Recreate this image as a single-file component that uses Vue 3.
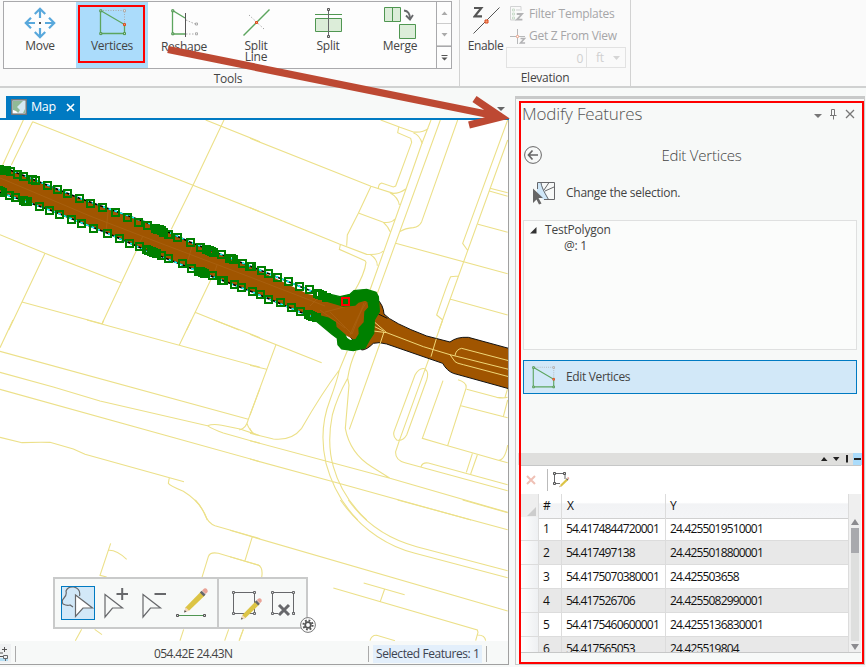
<script setup>
const rows = [
  ['1', '54.4174844720001', '24.4255019510001'],
  ['2', '54.417497138', '24.4255018800001'],
  ['3', '54.4175070380001', '24.425503658'],
  ['4', '54.417526706', '24.4255082990001'],
  ['5', '54.4175460600001', '24.4255136830001'],
  ['6', '54.417565053', '24.425519804'],
]

// Parcel and road lines, grouped by map tile. Units are thirds of a pixel.
const tiles = [
  { x: 0, y: 110, d: 'M70 30L8 165M98 35L34 165M98 35L579 226L780 305M617 30L780 95M672 30L579 226L514 358M0 374L135 430L364 519M135 430L66 576L26 660M66 576L306 641M409 422L306 641M632 510L560 660M585 607L717 660' },
  { x: 0, y: 320, d: 'M39 0L0 83M261 0L780 142M311 0L307 12M574 0L538 75M642 0L780 53M0 94L745 298M0 157L160 201L300 243L622 317Q640 311 665 316L720 327L780 347M622 317Q640 329 670 339L780 370M780 205L745 298Q739 325 718 330M740 308Q748 332 764 343M0 208L780 425M0 352L66 368Q110 366 150 367L220 387L255 403L552 485M508 472L505 490Q508 497 550 514Q605 548 622 600' },
  { x: 250, y: 320, d: 'M0 43L215 128M0 136L50 148M78 74L0 285M0 325Q5 340 20 345M0 340L70 357Q125 363 155 325Q215 220 268 150L292 92M268 150Q262 180 240 240Q205 330 228 430Q255 530 323 600M318 92Q300 130 293 175Q262 230 247 285Q230 370 250 440Q275 530 350 600M293 175L297 195L286 325Q300 400 365 440L420 475M402 36L298 328M0 362L420 475L773 577M0 417L250 485L663 600M495 165Q508 142 524 146Q538 155 530 180L470 345Q458 365 440 360Q428 350 432 335ZM578 0L548 85L448 362L437 395Q435 420 465 428L773 512M579 182L517 355L593 377L745 421L773 428M593 377L648 205Q652 187 624 179M650 208L740 232Q760 235 773 232M633 257L773 293M773 205L765 232M773 240L760 290M773 375Q765 420 745 421M513 440Q518 426 535 429L773 494M667 401L649 457M682 405L662 462' },
  { x: 250, y: 110, d: 'M0 85L363 229L430 250Q450 250 467 237M363 229L325 310L292 375L290 407M0 293L268 402L350 433Q390 435 399 423M392 30L450 52L490 66Q520 68 535 55M543 30L515 102L467 240L360 540M490 68Q510 75 517 102M446 52L443 68L482 85L485 97L437 228L430 231L395 219Q385 222 385 236M420 248Q445 262 448 285M327 310L400 337Q425 340 434 327M400 337Q415 350 420 365M360 433Q382 447 382 467M271 404L268 418L345 452L348 457Q345 490 310 550M571 30L382 550M623 30L515 335Q508 350 490 353Q465 355 450 365M437 400L773 491M773 30L638 400L652 420M773 90L567 660M720 235L773 248M718 243L773 259M684 343L773 367M626 498L602 500Q595 512 560 615L578 630M602 568L773 615' },
  { x: 0, y: 500, d: 'M586 0Q605 20 615 45Q625 70 645 77L780 116M757 110L735 182M780 197L655 160Q630 155 625 170L606 232M332 130L300 226L320 231M326 151Q350 150 380 178M245 388L226 422M284 388L306 404M551 388L540 422M686 388L674 422M730 388L718 422' },
  { x: 230, y: 500, d: 'M0 91L833 333M0 170L85 195Q100 203 95 232M40 388L27 422M331 0Q420 125 555 160L833 233M355 0Q430 105 560 140L833 212M503 0L833 89M698 0L833 38M310 264L742 390L744 397L737 422M743 405Q765 405 767 422M401 249L524 284M464 267L451 304M420 422Q425 405 440 406L495 422' },
]

const left = [
  [-3, 178], [5, 181], [12, 180], [18, 182], [31, 183], [53, 192], [71, 199], [97, 209], [107, 211], [142, 227], [172, 239], [202, 251], [238, 265], [271, 279], [307, 293], [346, 307], [382, 323], [415, 336], [442, 346],
  [466, 356], [472, 358], [478, 359], [484, 362], [490, 366], [505, 374], [532, 383], [571, 398], [601, 411], [620, 419], [628, 421], [634, 424], [640, 426], [664, 433], [688, 446], [694, 446], [699, 449], [727, 461], [748, 469],
  [-4, 240], [2, 243], [6, 247], [27, 257], [46, 263], [71, 271], [77, 273], [81, 275], [118, 289], [148, 302], [178, 314], [214, 329], [244, 341], [280, 356], [322, 371], [358, 386], [388, 401], [417, 409],
  [438, 418], [446, 420], [454, 424], [460, 428], [468, 431], [484, 435], [505, 446], [547, 461], [574, 474], [595, 483], [602, 485], [608, 488], [614, 489], [637, 497], [664, 510], [670, 511], [703, 524], [724, 533], [757, 545],
].map(([x, y]) => [x / 3, 110 + y / 3])
const right = [
  [3, 469], [34, 481], [56, 490], [82, 502], [115, 514], [148, 529], [178, 539], [201, 549], [208, 552], [216, 555], [228, 561],
  [8, 545], [31, 554], [55, 567], [91, 577], [124, 592], [151, 604], [174, 613], [181, 616], [188, 619], [198, 623],
].map(([x, y]) => [250 + x / 3, 110 + y / 3])
const vertices = [...left, ...right].map(([x, y]) => [Math.round(x - 0.5) - 3, Math.round(y - 0.5) - 3])
</script>

<template>
  <div class="app">
    <svg class="defs" width="0" height="0">
      <defs>
        <symbol id="vertex-shape" viewBox="0 0 27 27">
          <path d="M1.5 1.5H25.5V15" fill="none" stroke="#aaa" stroke-dasharray="1 1.5" />
          <path d="M1.5 1.5V24.5H25.5V15.5L1.5 1.5" fill="none" stroke="#5ca55e" stroke-width="1.3" />
          <path d="M.8.8h2v2h-2zM.8 23.6h2v2h-2zM24.5 23.6h2v2h-2z" fill="#cfe6cf" stroke="#4d944f" />
          <path d="M24.5.8h2v2h-2z" fill="#fff" stroke="#aaa" />
          <path d="M24.5 14.6h2v2h-2z" fill="#f3a078" stroke="#dc4a1c" />
        </symbol>
        <symbol id="pencil" viewBox="0 0 26 26">
          <path d="M1.5 25l1.2-5L19 3.5l4 4L6.5 23.5z" fill="#dcc445" />
          <path d="M1 25.5l1.6-5.4 4 3.6z" fill="#f3d9c0" />
          <path d="M1 25.5l.8-2.6 1.9 1.8z" fill="#555" />
          <path d="M17.5 4.8l2-2 4 4-2 2z" fill="#66676b" />
          <path d="M19.8 2.5L22 .5q2-.6 3 .8t.6 2.8l-2 2.2z" fill="#e9a396" />
        </symbol>
        <symbol id="frame" viewBox="0 0 24 24">
          <path d="M1.5 1.5h21v21h-21z" fill="none" stroke="#67686b" />
          <path d="M.5.5h2v2h-2zM21.5.5h2v2h-2zM.5 21.5h2v2h-2zM21.5 21.5h2v2h-2z" fill="#ddd" stroke="#67686b" />
        </symbol>
      </defs>
    </svg>

    <header class="ribbon">
      <section class="group tools">
        <div class="gallery">
          <div class="tool">
            <svg width="32" height="32" viewBox="0 0 32 32" fill="none" stroke="#58a8dc" stroke-width="2.2">
              <path d="M16 2V11M16 21V30M2 16H11M21 16H30M10.8 7L16 1.8L21.2 7M10.8 25L16 30.2L21.2 25M7 10.8L1.8 16L7 21.2M25 10.8L30.2 16L25 21.2" />
              <path d="M15 15h2v2h-2z" fill="#555" stroke="none" />
            </svg>
            <span>Move</span>
          </div>
          <div class="tool active">
            <svg class="shape" width="27" height="27"><use href="#vertex-shape" /></svg>
            <span>Vertices</span>
          </div>
          <div class="tool">
            <svg class="shape" width="27" height="28" viewBox="0 0 27 28" fill="none">
              <path d="M15 11L24 15M15 25H24" stroke="#aaa" stroke-dasharray="1.5 1.5" />
              <path d="M14 25H1.5V1.5L14 9" stroke="#5ca55e" stroke-width="1.3" />
              <path d="M14.5 4V28" stroke="#555" />
              <path d="M.8.8h2v2h-2zM.8 23.8h2v2h-2z" fill="#cfe6cf" stroke="#4d944f" />
              <path d="M24.5 14h2v2h-2zM24.5 23.8h2v2h-2z" fill="#fff" stroke="#aaa" />
            </svg>
            <span>Reshape</span>
          </div>
          <div class="tool">
            <svg class="shape" width="27" height="27" viewBox="0 0 27 27" fill="none">
              <path d="M6 6L21 20" stroke="#999" stroke-dasharray="1.2 2" />
              <path d="M.5 26.5L26.5 .5" stroke="#5ca55e" stroke-width="1.4" />
              <path d="M12.5 12.5h2v2h-2z" fill="#f3a078" stroke="#dc4a1c" />
            </svg>
            <span>Split<br />Line</span>
          </div>
          <div class="tool">
            <svg class="split" width="27" height="30" viewBox="0 0 27 30" fill="none">
              <path d="M0 6.5H27" stroke="#4f9651" />
              <path d="M.5 10.5h26v13H.5z" fill="#dcedd9" stroke="#4f9651" />
              <path d="M13.5 2V28" stroke="#67686b" />
              <path d="M12.5.5h2v2h-2zM12.5 27.5h2v2h-2z" fill="#ddd" stroke="#555" />
            </svg>
            <span>Split</span>
          </div>
          <div class="tool">
            <svg class="merge" width="33" height="33" viewBox="0 0 33 33" fill="none">
              <path d="M.5.5h16v14H.5zM15.5 17.5h16v14h-16z" fill="#dcedd9" stroke="#4f9651" />
              <path d="M8.5.5v14" stroke="#4f9651" />
              <path d="M20 3.5Q26 4 26 12M22 8.5L26 12.5L29 8" stroke="#67686b" stroke-width="1.8" />
            </svg>
            <span>Merge</span>
          </div>
          <div class="scroller">
            <i><svg width="7" height="4"><path d="M.5 4L3.5 .5L6.5 4z" fill="#aaa" /></svg></i>
            <i><svg width="7" height="4"><path d="M.5 0L3.5 3.5L6.5 0z" fill="#aaa" /></svg></i>
            <i class="more"><svg width="7" height="6"><path d="M.5 0h6v1h-6zM.5 2.5L3.5 5.5L6.5 2.5z" fill="#555" /></svg></i>
          </div>
        </div>
        <div class="caption">Tools</div>
      </section>

      <section class="group elevation">
        <div class="elev-body">
          <div class="enable">
            <svg width="28" height="29" viewBox="0 0 28 29" fill="none">
              <path d="M1 2H8.3L1.7 10.3H9" stroke="#555" stroke-width="2.2" />
              <path d="M.5 27.5L26.5 1.5" stroke="#555" />
              <path d="M12 14h3v3h-3z" fill="#f3a078" stroke="#dc4a1c" />
            </svg>
            <span>Enable</span>
          </div>
          <div class="elev-rows">
            <div class="elev-row">
              <svg width="17" height="16" viewBox="0 0 17 16" fill="none" stroke="#d2d3d4">
                <path d="M.5.5H11V5M.5.5V14H6" />
                <path d="M2.5 3h2v2h-2zM2.5 7h2v2h-2zM2.5 11h2v2h-2z" stroke="#cadccb" />
                <path d="M6 4h4M6 8h2" />
                <path d="M7 8h5l-5 5.6h5.4" stroke="#b3b3b5" stroke-width="1.8" />
              </svg>
              <span>Filter Templates</span>
            </div>
            <div class="elev-row second">
              <svg width="17" height="16" viewBox="0 0 17 16" fill="none">
                <path d="M0 8.5H15M7.5 1V16" stroke="#b7b8b9" />
                <path d="M6.5 7.5h2v2h-2z" fill="#fff" stroke="#eeb5a0" />
                <path d="M10.5 10.5h4l-4 4.5h4.6" stroke="#b3b3b5" stroke-width="1.6" />
              </svg>
              <span>Get Z From View</span>
            </div>
            <div class="elev-input">
              <b>0</b>
              <em>ft<svg width="7" height="4"><path d="M0 0h7L3.5 4z" fill="#d5d5d5" /></svg></em>
            </div>
          </div>
        </div>
        <div class="caption">Elevation</div>
      </section>
    </header>

    <main class="workspace">
      <section class="view">
        <div class="tabs">
          <div class="tab">
            <svg width="16" height="16" viewBox="0 0 16 16">
              <path d="M.8.8h14.4v14.4H.8z" fill="#d6e9f2" stroke="#777" stroke-width="1.4" />
              <path d="M2 2H12L8 6L6 8L9 11L7 14L2 11zM12 14l2-4v4z" fill="#91ba96" />
              <path d="M2 11l3 1 2 2H2z" fill="#fff" />
            </svg>
            <span>Map</span>
            <svg width="9" height="9" viewBox="0 0 9 9"><path d="M1 1L8 8M8 1L1 8" stroke="#fff" stroke-width="1.6" /></svg>
          </div>
          <svg class="tab-menu" width="8" height="4"><path d="M0 0h8L4 4z" fill="#666" /></svg>
        </div>

        <div class="map">
          <svg width="508" height="521" viewBox="0 120 508 521">
            <g v-for="(t, i) in tiles" :key="i" class="parcel" :transform="`translate(${t.x} ${t.y}) scale(.33333)`">
              <path :d="t.d" />
            </g>
            <g transform="translate(250 110) scale(.33333)">
              <path class="road" d="M382 568Q400 585 402 612Q425 638 530 678L600 696Q620 680 655 682L776 715V836L610 790Q590 782 578 760L410 702Q385 695 370 700Q350 720 335 720L300 680L370 600M385 612L412 625" />
              <path class="onroad" d="M372 635L410 668L520 710L600 734L776 778M362 662L410 668M374 650L402 664M600 734L615 755Q620 760 640 764L776 800M615 737Q618 718 635 715L776 752M402 666L390 702M559 686L543 740" />
            </g>
            <path class="band" d="M-4 169L10 170L47 185L79 198L148 223L190 242L250 266L308 294L345 302L365 296L373 312L355 340L345 335L330 325L300 312L250 291L190 268L150 252L107 233L50 210L-4 190Z" />
            <path class="faint" d="M0 178L5 180L90 216L160 243L250 277L325 306M108 212L106 232M143 236L138 246M193 243L188 260M217 265L212 280M318 298L310 306M325 312Q345 308 362 300M330 312L352 334L364 303M320 310L345 328M350 335Q358 315 366 303" />
            <g class="edge">
              <path d="M-4 169L10 170L47 185L79 198L148 223L190 242L250 266L316 293M-4 191L50 210L107 233L150 252L190 268L250 291L300 312L318 319" stroke="#000" />
              <path d="M-4 169L10 170L47 185L79 198L148 223L190 242L250 266L316 293M-4 191L50 210L107 233L150 252L190 268L250 291L300 312L318 319" stroke="#1ff" stroke-dasharray="3 3" />
            </g>
            <path transform="translate(250 110) scale(.33333)" class="mass" d="M222 549L270 560L300 553L312 542L350 538L378 547L385 560L388 605L373 630L371 670L358 690L345 714L310 722L275 717L264 704L262 685L245 672L198 633L196 614L235 624L256 637L258 652L285 675L290 685L300 692L318 688L328 672L327 655L343 637L345 605L357 592L354 575L345 570L325 576L315 585L280 588L235 575L220 570Z" />
            <rect v-for="(p, i) in vertices" :key="'v' + i" class="vertex" :x="p[0]" :y="p[1]" width="7" height="7" />
            <rect class="current" x="342" y="298" width="7" height="7" />
          </svg>

          <div class="edit-bar">
            <div class="bar-part first">
              <span class="bar-tool selected">
                <svg width="34" height="34" viewBox="0 0 34 34" fill="none" stroke="#67686b" stroke-width="1.2">
                  <path d="M18.5 10Q20 3 13 1Q7 0 5 5Q6 9 3 12Q0 15 2 18Q6 20 9 19L12 21" />
                  <path d="M14.5 9L31.5 22H22L14.5 30.5z" fill="#fff" />
                </svg>
              </span>
              <span class="bar-tool"><svg width="34" height="34" viewBox="0 0 34 34" fill="none" stroke="#67686b">
                <path d="M6 8.5L23.5 22H13.5L6 31z" stroke-width="1.2" />
                <path d="M17.5 8H29M23.2 2V14" stroke-width="2" />
              </svg></span>
              <span class="bar-tool"><svg width="34" height="34" viewBox="0 0 34 34" fill="none" stroke="#67686b">
                <path d="M6 8.5L23.5 22H13.5L6 31z" stroke-width="1.2" />
                <path d="M17.5 8H29" stroke-width="2" />
              </svg></span>
              <span class="bar-tool"><svg width="34" height="34" viewBox="0 0 34 34" fill="none">
                <path d="M3 29.5H29" stroke="#4f9651" />
                <path d="M1.5 28.5h2v2h-2zM28.5 28.5h2v2h-2z" fill="#ddd" stroke="#555" />
                <use href="#pencil" x="8" y="2" width="25" height="25" />
              </svg></span>
            </div>
            <div class="bar-part last">
              <span class="bar-tool"><svg width="34" height="34" viewBox="0 0 34 34">
                <use href="#frame" x="1" y="5" width="24" height="24" />
                <use href="#pencil" x="9" y="12" width="22" height="22" />
              </svg></span>
              <span class="bar-tool"><svg width="34" height="34" viewBox="0 0 34 34">
                <use href="#frame" x="2" y="5" width="24" height="24" />
                <path d="M9 18h12v9h3v5H9z" fill="#f7f9f8" />
                <path d="M10 19L20 29M20 19L10 29" stroke="#67686b" stroke-width="3" />
                <path d="M23.5 26.5h2v2h-2z" fill="#ddd" stroke="#67686b" />
              </svg></span>
            </div>
            <svg class="gear" width="16" height="16" viewBox="0 0 16 16">
              <circle cx="8" cy="8" r="7.4" fill="#fff" stroke="#777" />
              <circle cx="8" cy="8" r="4.6" fill="none" stroke="#555" stroke-width="2" stroke-dasharray="1.8 1.81" />
              <circle cx="8" cy="8" r="2.8" fill="none" stroke="#555" stroke-width="1.8" />
            </svg>
          </div>
        </div>

        <footer class="status">
          <svg class="snap" width="11" height="19" viewBox="0 0 11 19" fill="none">
            <path d="M0 0h11v19H0z" fill="#eff1f2" />
            <path d="M0 14h8v3H0z" fill="#b5dff5" />
            <path d="M2 5.5H7M4.5 3V8M0 9h3M0 12.5h3" stroke="#555" />
            <path d="M3.5 11.5h4v3h-4zM5.5 15v2" stroke="#67686b" />
          </svg>
          <i class="sep"></i>
          <span class="coords">054.42E 24.43N</span>
          <i class="sep"></i>
          <span class="selcount"><span>Selected Features: 1</span></span>
          <i class="sep"></i>
        </footer>
      </section>

      <aside class="dock">
        <div class="dock-title">
          <h1>Modify Features</h1>
          <svg width="42" height="13" viewBox="0 0 42 13" fill="none" stroke="#777">
            <path d="M0 6h8L4 10z" fill="#777" stroke="none" />
            <path d="M17.5 1.5h3v6h-3zM16 7.5h6.5M19.5 8V11.5M20.5 2V7" />
            <path d="M32 2L40 10M40 2L32 10" stroke-width="1.3" />
          </svg>
        </div>
        <div class="dock-head">
          <svg width="18" height="18" viewBox="0 0 18 18" fill="none" stroke="#666">
            <circle cx="9" cy="9" r="8.4" />
            <path d="M4.5 9H14M8.5 4.5L4.5 9L8.5 13.5" stroke-width="1.7" />
          </svg>
          <h2>Edit Vertices</h2>
        </div>
        <div class="selection">
          <svg width="24" height="24" viewBox="0 0 24 24" fill="none">
            <path d="M5 1.5L9 1.5L12 9L17 18.5H11L5 12z" fill="#cfe7f8" />
            <path d="M5.5 8V1.5H22.5V18.5H12M9 1.5Q9 6 16.5 18.5M13 10L22 6M12 9L17 1.5" stroke="#67686b" />
            <path d="M1 7.5L11 17H6.5L9.5 22.5L7 23.5L4.5 18.5L1 22z" fill="#666" />
          </svg>
          <span>Change the selection.</span>
        </div>
        <div class="tree">
          <div class="node"><svg width="7" height="7"><path d="M6.5 0V6.5H0z" fill="#333" /></svg><span>TestPolygon</span></div>
          <div class="leaf">@: 1</div>
        </div>
        <div class="edit-row">
          <svg width="23" height="23"><use href="#vertex-shape" /></svg>
          <span>Edit Vertices</span>
        </div>
        <div class="filler"></div>
        <div class="splitter">
          <svg width="30" height="8" viewBox="0 0 30 8">
            <path d="M0 6L3 2L6.5 6zM12 2h6.5L15.2 6zM25 0h2v7.5h-2z" fill="#222" />
          </svg>
          <i></i>
        </div>
        <div class="sheet">
          <div class="sheet-tools">
            <svg width="10" height="10" viewBox="0 0 10 10"><path d="M1 1L9 9M9 1L1 9" stroke="#efc0b5" stroke-width="2" /></svg>
            <i></i>
            <svg width="17" height="17" viewBox="0 0 17 17" fill="none">
              <path d="M1.5 1.5H12V7M1.5 1.5V11.5H7" stroke="#67686b" />
              <path d="M.5.5h2v2h-2zM10.5.5h2v2h-2zM.5 10.5h2v2h-2z" fill="#ddd" stroke="#555" />
              <use href="#pencil" x="6" y="5" width="10.5" height="10.5" />
            </svg>
          </div>
          <div class="grid">
            <div class="table">
              <div class="tr th"><i><svg width="9" height="9"><path d="M9 0V9H0z" fill="#ccc" /></svg></i><span>#</span><span>X</span><span>Y</span></div>
              <div v-for="r in rows" :key="r[0]" class="tr"><i></i><span>{{ r[0] }}</span><span class="num">{{ r[1] }}</span><span class="num">{{ r[2] }}</span></div>
            </div>
            <div class="scroll">
              <svg width="8" height="6"><path d="M0 6L4 0L8 6z" fill="#8b8b8f" /></svg>
              <div class="track"><div class="thumb"></div></div>
              <svg width="8" height="6"><path d="M0 0L4 6L8 0z" fill="#8b8b8f" /></svg>
            </div>
          </div>
        </div>
      </aside>
    </main>

    <div class="mark tool-mark"></div>
    <div class="mark dock-mark"></div>
    <svg class="arrow" width="866" height="140" viewBox="0 0 866 140">
      <path d="M168 49.5L496 116M474.5 99L501 117L469 125" fill="none" stroke="#bd4933" stroke-width="7.3" />
    </svg>
  </div>
</template>

<style>
body { margin: 0; overflow: hidden; }
</style>

<style scoped>
* { box-sizing: border-box; }
.app { position: relative; width: 866px; height: 667px; overflow: hidden; display: flex; flex-direction: column; background: #f7f9f8; color: #444; font-family: "Open Sans", "Noto Sans", sans-serif; font-size: 12px; letter-spacing: -0.27px; line-height: 16px; }
svg { display: block; flex: none; }
i { display: block; font-style: normal; }
.defs { position: absolute; }

.ribbon { height: 88px; flex: none; display: flex; background: #fafafa; border-bottom: 2px solid #d0d1d1; }
.group { height: 86px; border-right: 1px solid #d2d2d2; }
.caption { text-align: center; line-height: 18px; }
.tools { width: 460px; padding: 1px 0 0 3px; }
.tools .caption { padding-top: 1px; width: 450px; }
.gallery { display: flex; width: 449px; height: 68px; border: 1px solid #a9a9ac; background: #fdfdfd; }
.tool { width: 72px; display: flex; flex-direction: column; align-items: center; text-align: center; line-height: 11px; padding-top: 5px; }
.tool svg { margin-bottom: 1px; }
.tool .shape { margin: 2px 0 4px; }
.tool .split { margin: 1px 0 2px; }
.tool .merge { margin: 0; }
.active { background: #abdcfb; }
.scroller { width: 15px; margin-left: auto; display: flex; flex-direction: column; border-left: 1px solid #a9a9ac; }
.scroller i { flex: 1; display: flex; align-items: center; justify-content: center; border-bottom: 1px solid #ccc; }
.scroller .more { border-top: 1px solid #a9a9ac; border-bottom: 0; }

.elevation { width: 171px; }
.elev-body { display: flex; height: 69px; }
.enable { width: 50px; padding: 6px 0 0 1px; display: flex; flex-direction: column; align-items: center; }
.enable svg { margin-left: 3px; }
.enable span { line-height: 16px; margin-top: 3px; letter-spacing: -0.35px; }
.elev-rows { color: #a6a6a8; }
.elev-row { display: flex; gap: 2px; align-items: center; height: 20px; margin-top: 4px; letter-spacing: -0.25px; }
.second { margin-top: 2px; }
.elev-input { margin: 1px 0 0 -4px; width: 120px; height: 21px; display: flex; border: 1px solid #e2e2e2; color: #d0d0d0; }
.elev-input b { width: 80px; border-right: 1px solid #e2e2e2; font-weight: 400; text-align: right; padding-right: 3px; line-height: 21px; }
.elev-input em { flex: 1; font-style: normal; display: flex; align-items: center; justify-content: space-between; padding: 1px 5px 0 9px; }
.elevation .caption { line-height: 18px; }

.workspace { flex: 1; min-height: 0; display: flex; justify-content: space-between; padding: 8px 1px 2px 0; }
.view { width: 509px; display: flex; flex-direction: column; border-bottom: 1px solid #a0a0a0; }
.tabs { height: 24px; flex: none; display: flex; align-items: flex-start; justify-content: space-between; padding: 0 4px 0 6px; border-bottom: 2px solid #007ac2; }
.tab { width: 74px; height: 22px; display: flex; align-items: center; background: #007ac2; color: #fff; padding-left: 5px; }
.tab span { font-size: 12.5px; width: 39px; padding-left: 4px; letter-spacing: -0.4px; }
.tab-menu { margin-top: 11px; }
.map { position: relative; height: 521px; flex: none; background: #fff; border-right: 1px solid #a0a0a0; overflow: hidden; }
.parcel path { fill: none; stroke: #ece089; stroke-width: 3.3; }
.road { fill: #a05500; stroke: #111; stroke-width: 3; }
.onroad { fill: none; stroke: #f0d878; stroke-width: 3; }
.band { fill: #a05500; }
.faint { fill: none; stroke: #aa6212; stroke-width: 0.8; }
.edge path { fill: none; stroke-width: 1.5; }
.mass { fill: #008000; stroke: #008000; stroke-width: 4; }
.vertex { fill: none; stroke: #008000; stroke-width: 2; shape-rendering: crispEdges; }
.current { fill: none; stroke: #f00; stroke-width: 2; }

.edit-bar { position: absolute; left: 53px; top: 457px; width: 255px; height: 52px; display: flex; border: 2px solid #c9caca; background: #f7f9f8; }
.bar-part { display: flex; align-items: center; gap: 4px; padding-left: 6px; }
.bar-part.first { width: 164px; border-right: 2px solid #c9caca; }
.bar-part.last { padding-left: 12px; }
.bar-tool { width: 34px; height: 34px; }
.selected { background: #d2e8f8; outline: 1px solid #007ac2; outline-offset: -1px; }
.gear { position: absolute; right: -10px; bottom: -6px; }

.status { flex: 1; display: flex; align-items: center; background: #f7f9f8; border-right: 1px solid #a0a0a0; padding-top: 2px; }
.snap { margin-right: 4px; }
.sep { width: 1px; height: 16px; background: #aaa; }
.coords { width: 352px; padding-left: 138px; letter-spacing: -0.6px; }
.selcount { width: 117px; padding: 0 4px; }
.selcount span { display: block; background: #e3effb; padding: 1px 3px 0; height: 18px; white-space: nowrap; color: #3c4350; letter-spacing: -0.43px; }

.dock { width: 350px; display: flex; flex-direction: column; border: 1px solid #c8c9c9; border-top: 3px solid #c8c9c9; }
.dock h1, .dock h2 { margin: 0; font-weight: 300; color: #555; }
.dock-title { height: 30px; flex: none; display: flex; align-items: center; justify-content: space-between; padding: 0 8px 0 6px; }
.dock h1 { font-size: 17px; letter-spacing: -0.15px; }
.dock-head { height: 52px; flex: none; display: flex; align-items: center; padding-left: 8px; }
.dock h2 { font-size: 15px; flex: 1; text-align: center; padding-right: 3px; letter-spacing: -0.22px; color: #444; }
.selection { height: 24px; flex: none; display: flex; align-items: center; gap: 10px; padding-left: 16px; }
.tree { height: 130px; flex: none; margin: 15px 7px 0; border: 1px solid #dfe0e0; background: #fbfcfb; padding-top: 1px; }
.node { display: flex; align-items: center; gap: 8px; padding-left: 6px; letter-spacing: -0.2px; }
.leaf { padding-left: 40px; }
.edit-row { height: 34px; flex: none; margin: 10px 7px 0; display: flex; align-items: center; gap: 11px; padding-left: 8px; border: 1px solid #007ac2; background: #d2e8f8; letter-spacing: -0.35px; }
.filler { flex: 1; }
.splitter { height: 12px; flex: none; display: flex; align-items: center; justify-content: flex-end; background: #dfdfdd; margin: 0 2px; }
.splitter svg { margin-right: 2px; }
.splitter i { width: 9px; height: 12px; border: solid #abdcfb; border-width: 5px 1px; background: #222; }
.sheet { height: 188px; flex: none; margin: 0 3px 11px; background: #fff; border: solid #c6c7c7; border-width: 1px 0; display: flex; flex-direction: column; }
.sheet-tools { height: 28px; flex: none; display: flex; align-items: center; padding-left: 7px; }
.sheet-tools i { width: 1px; height: 22px; background: #bbb; margin: 0 5px 0 11px; }
.grid { flex: 1; min-height: 0; display: flex; }
.table { width: 330px; overflow: hidden; color: #111; }
.tr { display: grid; grid-template-columns: 20px 23px 104px 183px; height: 24px; }
.tr > * { border-right: 1px solid #dcdcdc; border-bottom: 1px solid #dcdcdc; line-height: 23px; padding-left: 4px; }
.tr > i { background: linear-gradient(90deg, #fff, #eef0f2); padding: 0; }
.tr:nth-child(odd) > span { background: #e8e8e8; }
.tr.th { height: 23px; }
.tr.th > span { line-height: 24px; border-bottom-color: #d0d0d0; }
.tr.th:first-child > span { background: linear-gradient(#fff 35%, #f2f3f5 42%, #f4f5f7); }
.tr.th > span:nth-child(3) { padding-left: 5px; }
.tr.th > i { background: #eee; display: flex; align-items: flex-end; justify-content: flex-end; padding: 0 2px 2px 0; }
.tr > .num { letter-spacing: -0.82px; }
.scroll { flex: 1; background: #efefef; display: flex; flex-direction: column; align-items: center; padding: 25px 0 2px; }
.track { flex: 1; width: 8px; background: #dedfde; margin: 3px 0; }
.thumb { height: 25px; background: #a8a9ad; }

.mark { position: absolute; border: 2px solid #f00; }
.tool-mark { left: 78px; top: 5px; width: 67px; height: 58px; }
.dock-mark { left: 519px; top: 101px; width: 345px; height: 563px; }
.arrow { position: absolute; left: 0; top: 0; }
</style>
